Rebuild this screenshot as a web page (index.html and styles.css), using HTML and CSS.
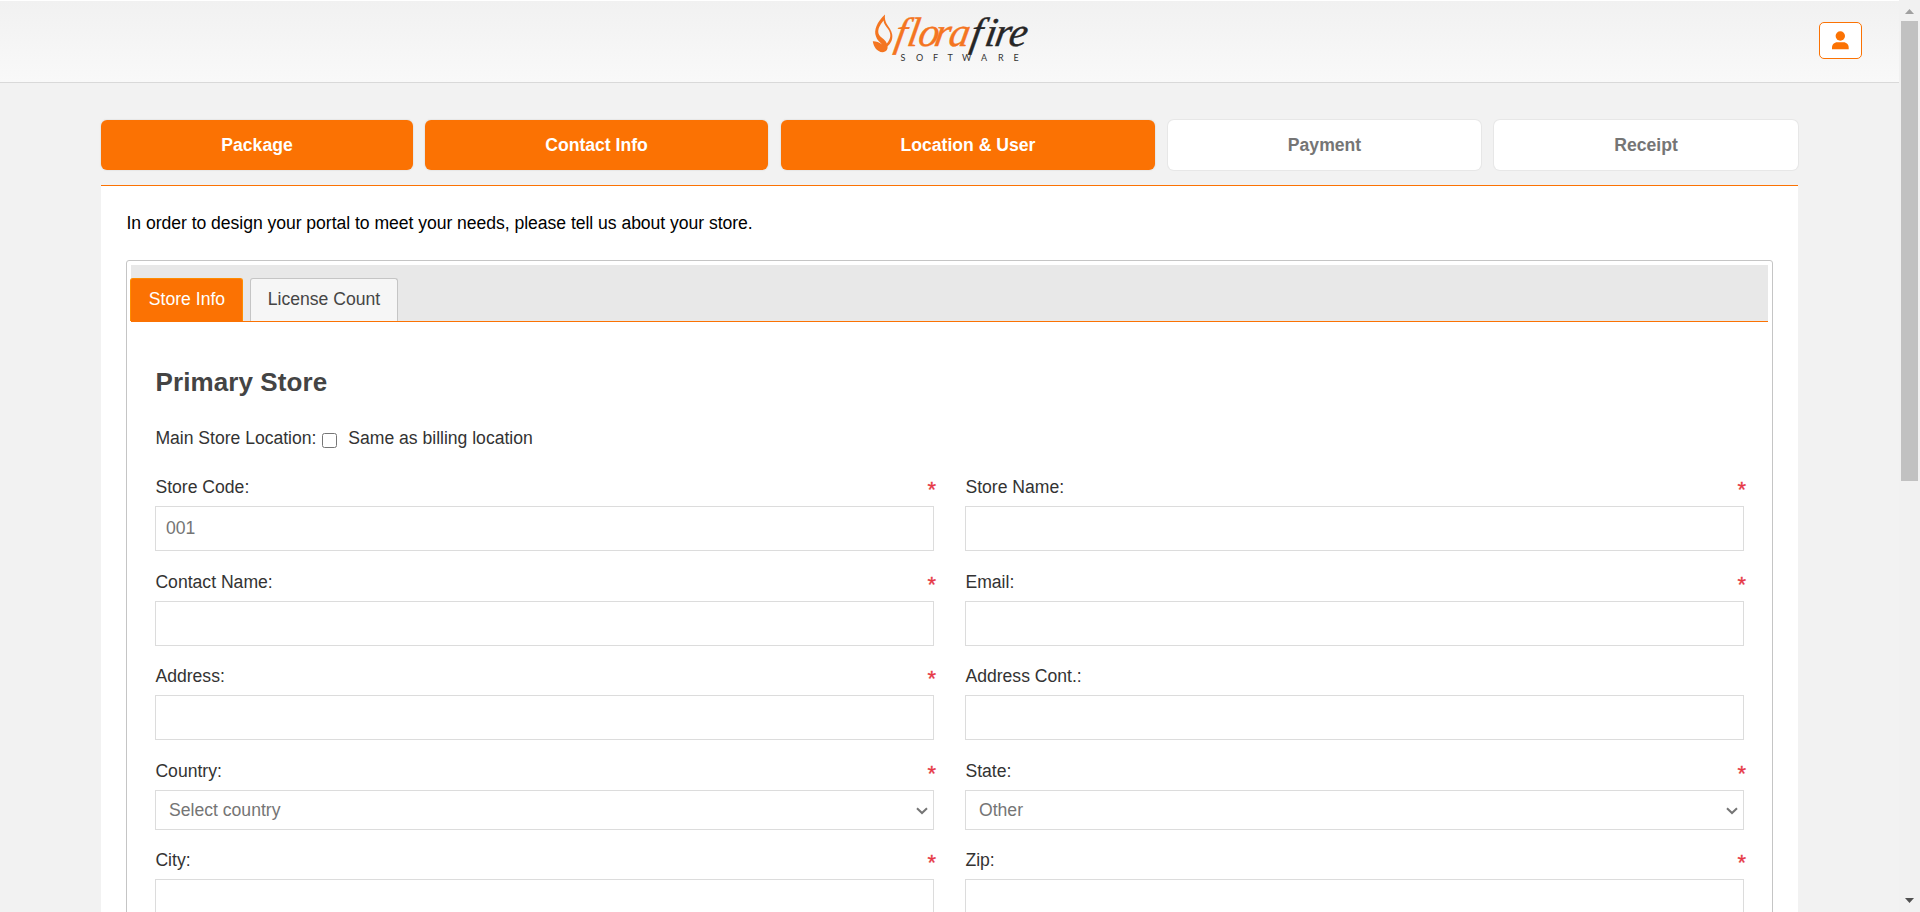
FILE: index.html
```html
<!DOCTYPE html>
<html lang="en">
<head>
<meta charset="utf-8">
<title>Florafire Software</title>
<link rel="stylesheet" href="styles.css">
</head>
<body>
<div class="page">
  <header class="header">
    <svg class="logo" width="180" height="60" viewBox="870 8 180 60">
      <path class="flame" fill-rule="evenodd" d="M885 14.500C877 22 873.500 30 876 36.500C877 40 880 42 882 44.500C879 42 875.500 41 872.800 41.200C873.500 47 877 51.500 882.500 52.300C886.500 52 888 49 887.500 46.500C890.500 43.500 893 40 892.200 34.500C891.500 30.500 888.800 27 886.500 23.500C885.300 21 884.500 18.500 885 14.500ZM883.500 20.500C880 25 877.500 29 878.500 33.500C880 38 885 38.500 886.800 43.500C891 38.500 891.500 34 888 29C886 26 883.800 24 883.500 20.500Z"/>
      <text class="logo-name" transform="translate(8.200 0) skewX(-10)" y="46.500" x="893.500 906 917 933 947.500"><tspan class="flora">flora</tspan><tspan class="fire" x="969 983.500 993.500 1007.500">fire</tspan></text>
      <text class="logo-sub" x="900.500 916 933 947.500 962 981 998 1013.500" y="60.500">SOFTWARE</text>
    </svg>
    <button class="user" aria-label="Account">
      <svg width="17" height="19" viewBox="0 0 17 19"><circle cx="8.300" cy="5" r="4.700"/><path d="M0 18.200v-1.500c0-3 2.300-5.400 5.200-5.400h6.300c2.900 0 5.200 2.400 5.200 5.400v1.500z"/></svg>
    </button>
  </header>
  <main class="content">
    <nav class="steps">
      <div class="step done">Package</div>
      <div class="step done trim">Contact Info</div>
      <div class="step done trim">Location &amp; User</div>
      <div class="step trim">Payment</div>
      <div class="step">Receipt</div>
    </nav>
    <section class="panel">
      <p class="intro">In order to design your portal to meet your needs, please tell us about your store.</p>
      <div class="tabbox">
        <div class="tabs">
          <div class="tab active">Store Info</div>
          <div class="tab">License Count</div>
        </div>
        <form class="form">
          <h2 class="title">Primary Store</h2>
          <label class="same"><span>Main Store Location:</span><input class="check" type="checkbox"><span>Same as billing location</span></label>
          <div class="grid">
            <div class="field"><div class="label">Store Code:<b class="req">*</b></div><input class="input" placeholder="001"></div>
            <div class="field"><div class="label">Store Name:<b class="req">*</b></div><input class="input"></div>
            <div class="field"><div class="label">Contact Name:<b class="req">*</b></div><input class="input"></div>
            <div class="field"><div class="label">Email:<b class="req">*</b></div><input class="input"></div>
            <div class="field"><div class="label">Address:<b class="req">*</b></div><input class="input"></div>
            <div class="field"><div class="label">Address Cont.:</div><input class="input"></div>
            <div class="field"><div class="label">Country:<b class="req">*</b></div><div class="input select">Select country<svg width="12" height="8" viewBox="0 0 12 8"><path d="M1 1.200l5 4.800 5-4.800"/></svg></div></div>
            <div class="field"><div class="label">State:<b class="req">*</b></div><div class="input select">Other<svg width="12" height="8" viewBox="0 0 12 8"><path d="M1 1.200l5 4.800 5-4.800"/></svg></div></div>
            <div class="field"><div class="label">City:<b class="req">*</b></div><input class="input"></div>
            <div class="field"><div class="label">Zip:<b class="req">*</b></div><input class="input"></div>
          </div>
        </form>
      </div>
    </section>
  </main>
</div>
<div class="scrollbar">
  <svg width="9" height="5" viewBox="0 0 9 5"><path fill="#a0a0a0" d="M4.500 0L9 5H0z"/></svg>
  <div class="thumb"></div>
  <svg class="down" width="9" height="5" viewBox="0 0 9 5"><path fill="#505050" d="M0 0h9L4.500 5z"/></svg>
</div>
</body>
</html>
```
FILE: styles.css
```css
* { box-sizing: border-box; }
body {
  margin: 0;
  height: 912px;
  display: flex;
  overflow: hidden;
  background: #f2f2f2;
  font: 17.6px/20px "Liberation Sans", Arial, sans-serif;
  color: #333;
}
.page { width: 1899px; height: 912px; overflow: hidden; }
.header {
  height: 83px;
  display: grid;
  grid-template-columns: 180px 1fr;
  padding-left: 870px;
  border-top: 1px solid #fff;
  border-bottom: 1px solid #d9d9d9;
  background: linear-gradient(#f1f1f1, #f9f9f9);
}
.logo { margin-top: 7px; overflow: visible; }
.flame { fill: #f47521; }
.logo-name { font: italic 41px "Liberation Serif", serif; stroke-width: .4; }
.flora { fill: #f47521; stroke: #f47521; }
.fire { fill: #262626; stroke: #262626; }
.logo-sub { font: 9px Lato, sans-serif; fill: #333; }
.user {
  justify-self: end;
  width: 43px;
  height: 37px;
  margin: 21px 37px 0 0;
  padding: 0 0 1px;
  display: flex;
  align-items: center;
  justify-content: center;
  border: 1px solid #fb7203;
  border-radius: 5px;
  background: #fff;
  fill: #fb7203;
}
.content { padding: 37px 101px 0; }
.steps {
  height: 65px;
  display: grid;
  grid-template-columns: 312px 344px 375px 314px 304px;
  column-gap: 12px;
}
.step {
  height: 50px;
  display: flex;
  align-items: center;
  justify-content: center;
  border-radius: 6px;
  background: #fff;
  box-shadow: 0 0 0 1px #e7e7e7;
  color: #757575;
  font-weight: bold;
}
.trim { margin-right: 1px; }
.done { background: #fb7203; color: #fff; box-shadow: 0 0 1px 1px #e7e7e7; }
.panel {
  height: 740px;
  padding: 27px 25px 0;
  border-top: 1px solid #fb7203;
  background: #fff;
}
.intro { margin: 0 0 27px; padding-left: .5px; color: #000; letter-spacing: -.044px; }
.tabbox {
  height: 680px;
  padding: 4px;
  border: 1px solid #c5c5c5;
  border-radius: 3px;
}
.tabs {
  height: 57px;
  display: flex;
  align-items: flex-end;
  gap: 7px;
  border-bottom: 1px solid #fb7203;
  background: #e8e8e8;
}
.tab {
  width: 148px;
  height: 43px;
  padding-top: 10px;
  border: 1px solid #c5c5c5;
  border-bottom: 0;
  border-radius: 3px 3px 0 0;
  background: #f6f6f6;
  color: #454545;
  text-align: center;
}
.active { width: 113px; margin-left: -1px; padding-left: 1px; background: #fb7203; border-color: #ff8c00; color: #fff; }
.form { padding: 45px 24px 0; }
.title { margin: 0; padding-left: .5px; font-size: 26px; line-height: 30px; letter-spacing: .1px; color: #444; }
.same { display: flex; align-items: center; margin-top: 31px; padding-left: .4px; height: 20px; letter-spacing: -.02px; }
.check { width: 15px; height: 15px; margin: 5px 11px 0 6px; }
.grid {
  margin-top: 29px;
  display: grid;
  grid-template-columns: 779px 779px;
  column-gap: 31px;
  grid-template-rows: 95px 94px 95px 89px 94px;
}
.label { display: flex; justify-content: space-between; height: 29px; padding-left: .4px; }
.req { margin-right: -2px; padding-top: 3px; color: #e63946; font-weight: normal; font-size: 22px; -webkit-text-stroke: .3px #e63946; }
.input {
  display: block;
  width: 779px;
  height: 45px;
  padding: 0 10px;
  border: 1px solid #dcdcdc;
  border-radius: 0;
  background: #fff;
  font: inherit;
  color: #757575;
}
.input::placeholder { color: #757575; }
.select { height: 40px; padding: 0 5px 0 13px; display: flex; align-items: center; justify-content: space-between; }
.select svg { fill: none; stroke: #757575; stroke-width: 2; margin-top: 2px; }
.scrollbar {
  width: 21px;
  height: 912px;
  padding: 9px 2px;
  display: flex;
  flex-direction: column;
  align-items: center;
  background: #f1f1f1;
}
.thumb { width: 17px; height: 460px; margin-top: 7px; background: #c1c1c1; }
.down { margin-top: auto; }
```
